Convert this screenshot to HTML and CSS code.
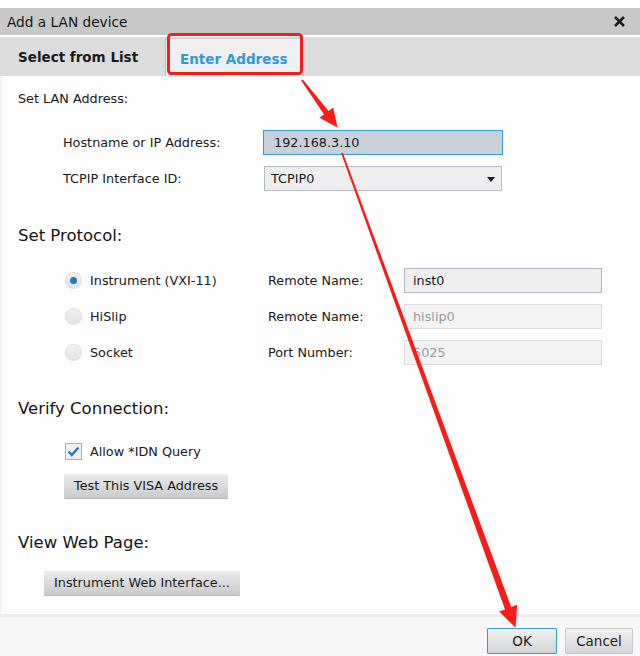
FILE: index.html
```html
<!DOCTYPE html>
<html>
<head>
<meta charset="utf-8">
<title>Add a LAN device</title>
<link rel="stylesheet" href="styles.css">
</head>
<body>
<div class="dialog">
  <div class="titlebar">
    <span class="title">Add a LAN device</span>
    <svg class="close" width="11" height="11" viewBox="0 0 11 11"><path d="M1 1L10 10M10 1L1 10" stroke="#1c1c1c" stroke-width="2.6" fill="none"/></svg>
  </div>
  <div class="tabs">
    <div class="tab">Select from List</div>
    <div class="tab active">Enter Address</div>
  </div>
  <div class="content">
    <div class="sub">Set LAN Address:</div>
    <div class="frow first">
      <span class="flabel">Hostname or IP Address:</span>
      <div class="field focus">192.168.3.10</div>
    </div>
    <div class="frow">
      <span class="flabel">TCPIP Interface ID:</span>
      <div class="field select">TCPIP0<span class="caret"></span></div>
    </div>

    <div class="heading h-proto">Set Protocol:</div>
    <div class="prow first">
      <span class="radio on"></span>
      <span class="plabel">Instrument (VXI-11)</span>
      <span class="rlabel">Remote Name:</span>
      <div class="pfield">inst0</div>
    </div>
    <div class="prow">
      <span class="radio"></span>
      <span class="plabel">HiSlip</span>
      <span class="rlabel">Remote Name:</span>
      <div class="pfield disabled">hislip0</div>
    </div>
    <div class="prow">
      <span class="radio"></span>
      <span class="plabel">Socket</span>
      <span class="rlabel">Port Number:</span>
      <div class="pfield disabled">5025</div>
    </div>

    <div class="heading h-verify">Verify Connection:</div>
    <div class="crow">
      <span class="check"><svg width="13" height="11" viewBox="0 0 13 11"><path d="M1.5 5.5L4.8 9L11.5 1.5" stroke="#2b78b6" stroke-width="2.4" fill="none"/></svg></span>
      <span class="plabel">Allow *IDN Query</span>
    </div>
    <div class="brow test"><button class="btn">Test This VISA Address</button></div>

    <div class="heading h-web">View Web Page:</div>
    <div class="brow web"><button class="btn">Instrument Web Interface...</button></div>
  </div>
  <div class="footer">
    <button class="btn fbtn ok">OK</button>
    <button class="btn fbtn">Cancel</button>
  </div>
</div>

<svg class="annot" width="640" height="656" viewBox="0 0 640 656">
  <rect x="168.5" y="34.5" width="133" height="39" rx="3" ry="3" fill="none" stroke="#f41d1a" stroke-width="3"/>
  <polygon fill="#f41d1a" points="301.2,80.6 302.8,79.4 328.6,111.0 333.2,107.6 337.5,127.5 319.5,117.8 324.0,114.4"/>
  <polygon fill="#f41d1a" points="341.1,153.3 342.9,152.7 511.2,607.0 517.2,604.8 515.5,627.5 499.2,611.6 505.0,609.4"/>
</svg>
</body>
</html>
```
FILE: styles.css
```css
* { box-sizing: border-box; }
html, body { margin: 0; padding: 0; }
body {
  background: #ffffff;
  width: 640px;
  height: 656px;
  overflow: hidden;
  position: relative;
  font-family: "DejaVu Sans", Verdana, sans-serif;
  font-size: 12.8px;
  color: #1a1a1a;
}
.dialog { padding-top: 8px; }
.titlebar {
  height: 27px;
  background: #c8c8c8;
  display: flex;
  align-items: center;
  justify-content: space-between;
  padding: 0 15px 0 7px;
  font-size: 13.7px;
  color: #151515;
}
.close { display: block; }
.tabs {
  margin-top: 2px;
  height: 39px;
  background: #dcdcdc;
  display: flex;
  align-items: flex-end;
}
.tab {
  height: 39px;
  line-height: 41px;
  font-weight: bold;
  font-size: 13.5px;
  padding-left: 18px;
  width: 165px;
  color: #1a1a1a;
}
.tab.active {
  width: 135px;
  height: 38px;
  line-height: 40px;
  padding-left: 14px;
  background: #efefef;
  border-left: 1px solid #b9b9b9;
  border-top: 1px solid #d2d2d2;
  border-top-left-radius: 3px;
  color: #2f9ad6;
}
.content {
  height: 537px;
  background: #fdfdfd;
  border-left: 2px solid #f3f3f3;
  padding: 15px 0 0 16px;
}
.sub { height: 16px; line-height: 16px; }
.frow {
  display: flex;
  align-items: center;
  height: 25px;
  margin-top: 11px;
  padding-left: 45px;
}
.frow.first { margin-top: 23px; }
.flabel { width: 200px; }
.field {
  height: 25px;
  width: 240px;
  line-height: 23px;
  padding-left: 10px;
  border: 1px solid #b6bac2;
  background: #eeeeee;
  position: relative;
}
.field.focus {
  background: #c8d0da;
  border-color: #3a9ad6;
}
.field.select { margin-left: 1px; width: 238px; padding-left: 6px; }
.caret {
  position: absolute;
  right: 6px;
  top: 10px;
  width: 0; height: 0;
  border-left: 4px solid transparent;
  border-right: 4px solid transparent;
  border-top: 5px solid #1a1a1a;
}
.heading {
  font-size: 16.5px;
  height: 20px;
  line-height: 20px;
  color: #151515;
}
.h-proto { margin-top: 35px; }
.h-verify { margin-top: 34px; }
.h-web { margin-top: 35px; }
.prow {
  display: flex;
  align-items: center;
  height: 25px;
  margin-top: 11px;
  padding-left: 47px;
}
.prow.first { margin-top: 22px; }
.radio {
  width: 17px; height: 17px;
  border-radius: 50%;
  background: linear-gradient(#f2f2f2, #e0e0e0);
  box-shadow: inset 0 0 0 1px #e2e2e2;
  display: flex;
  align-items: center;
  justify-content: center;
  margin-right: 8px;
}
.radio.on::after {
  content: "";
  width: 7px; height: 7px;
  border-radius: 50%;
  background: #2a78b4;
}
.plabel { width: 178px; }
.rlabel { width: 136px; }
.pfield {
  width: 198px;
  height: 25px;
  line-height: 23px;
  padding-left: 8px;
  border: 1px solid #b4b8c0;
  background: #eeeeee;
}
.pfield.disabled {
  border-color: #dcdcdc;
  background: #f3f3f3;
  color: #9a9a9a;
}
.crow {
  display: flex;
  align-items: center;
  height: 17px;
  margin-top: 24px;
  padding-left: 47px;
}
.check {
  width: 17px; height: 17px;
  border: 1px solid #a9aeb6;
  background: #eff0f2;
  display: flex;
  align-items: center;
  justify-content: center;
  margin-right: 8px;
}
.check svg { display: block; }
.brow { display: flex; }
.brow.test { margin-top: 14px; padding-left: 46px; }
.brow.web { margin-top: 18px; padding-left: 26px; }
.btn {
  font-family: "DejaVu Sans", Verdana, sans-serif;
  font-size: 12.8px;
  color: #1a1a1a;
  height: 24px;
  padding: 0 10px;
  border: none;
  border-radius: 1px;
  background: linear-gradient(#ebebeb, #c9cacd);
  box-shadow: 0 1px 0 #b9babd;
  line-height: 24px;
}
.footer {
  margin-top: 1px;
  height: 42px;
  border-top: 3px solid #ececec;
  background: #f7f7f7;
  display: flex;
  justify-content: flex-end;
  align-items: flex-start;
  padding: 11px 7px 0 0;
  gap: 8px;
}
.fbtn {
  height: 26px;
  width: 68px;
  padding: 0;
  text-align: center;
  font-size: 13.5px;
  border: 1px solid #c9c9c9;
  box-shadow: none;
  background: linear-gradient(#f2f2f2, #d3d4d7);
}
.fbtn.ok {
  width: 70px;
  border-color: #3a9ad6;
}
.annot {
  position: absolute;
  left: 0; top: 0;
  pointer-events: none;
}
```
